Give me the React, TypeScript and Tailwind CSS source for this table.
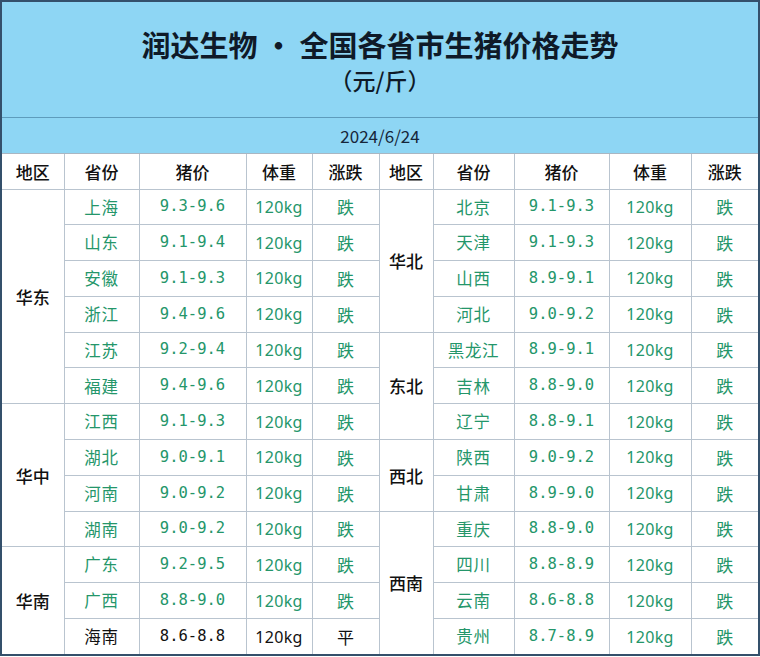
type Row = { province: string; price: string; trend?: string; plain?: boolean };
type Group = { region: string; rows: Row[] };

const leftGroups: Group[] = [
  {
    region: '华东',
    rows: [
      { province: '上海', price: '9.3-9.6' },
      { province: '山东', price: '9.1-9.4' },
      { province: '安徽', price: '9.1-9.3' },
      { province: '浙江', price: '9.4-9.6' },
      { province: '江苏', price: '9.2-9.4' },
      { province: '福建', price: '9.4-9.6' },
    ],
  },
  {
    region: '华中',
    rows: [
      { province: '江西', price: '9.1-9.3' },
      { province: '湖北', price: '9.0-9.1' },
      { province: '河南', price: '9.0-9.2' },
      { province: '湖南', price: '9.0-9.2' },
    ],
  },
  {
    region: '华南',
    rows: [
      { province: '广东', price: '9.2-9.5' },
      { province: '广西', price: '8.8-9.0' },
      { province: '海南', price: '8.6-8.8', trend: '平', plain: true },
    ],
  },
];

const rightGroups: Group[] = [
  {
    region: '华北',
    rows: [
      { province: '北京', price: '9.1-9.3' },
      { province: '天津', price: '9.1-9.3' },
      { province: '山西', price: '8.9-9.1' },
      { province: '河北', price: '9.0-9.2' },
    ],
  },
  {
    region: '东北',
    rows: [
      { province: '黑龙江', price: '8.9-9.1' },
      { province: '吉林', price: '8.8-9.0' },
      { province: '辽宁', price: '8.8-9.1' },
    ],
  },
  {
    region: '西北',
    rows: [
      { province: '陕西', price: '9.0-9.2' },
      { province: '甘肃', price: '8.9-9.0' },
    ],
  },
  {
    region: '西南',
    rows: [
      { province: '重庆', price: '8.8-9.0' },
      { province: '四川', price: '8.8-8.9' },
      { province: '云南', price: '8.6-8.8' },
      { province: '贵州', price: '8.7-8.9' },
    ],
  },
];

type Flat = Row & { region?: string; span?: number; lastGroup: boolean };

// 그룹을 13줄로 펼치기 (첫 줄에만 지역 셀)
function flatten(groups: Group[]): Flat[] {
  const out: Flat[] = [];
  groups.forEach((g, gi) => {
    g.rows.forEach((r, ri) => {
      out.push({
        ...r,
        region: ri === 0 ? g.region : undefined,
        span: ri === 0 ? g.rows.length : undefined,
        lastGroup: gi === groups.length - 1,
      });
    });
  });
  return out;
}

const left = flatten(leftGroups);
const right = flatten(rightGroups);

const line = 'border-[#b9c4cf]';
const cjk = "font-['Noto_Sans_CJK_SC','Noto_Sans',sans-serif]";

function Cells({ row, isLast, lastCol }: { row: Flat; isLast: boolean; lastCol: boolean }) {
  const color = row.plain ? 'text-[#111111]' : 'text-[#24966a]';
  const b = isLast ? '' : 'border-b';
  return (
    <>
      {row.region && (
        <td
          rowSpan={row.span}
          className={`border-r ${row.lastGroup ? '' : 'border-b'} ${line} text-center text-[17px] font-medium text-[#111111]`}
        >
          {row.region}
        </td>
      )}
      <td className={`border-r ${b} ${line} text-center text-[16.5px] tracking-[0.04em] ${color}`}>
        {row.province}
      </td>
      <td className={`border-r ${b} ${line} text-center font-['DejaVu_Sans_Mono',monospace] text-[15.5px] ${color}`}>
        {row.price}
      </td>
      <td className={`border-r ${b} ${line} text-center text-[16px] tracking-[0.02em] font-['Noto_Sans',sans-serif] ${color}`}>
        120kg
      </td>
      <td className={`${lastCol ? '' : 'border-r'} ${b} ${line} text-center text-[17px] ${color}`}>
        {row.trend ?? '跌'}
      </td>
    </>
  );
}

const headers = ['地区', '省份', '猪价', '体重', '涨跌'];

export default function App() {
  return (
    <div className={`w-[760px] h-[657px] bg-white ${cjk}`}>
      <div className="w-[760px] h-[656px] border-2 border-[#34506b] overflow-hidden">
        {/* 제목 */}
        <div className="h-[116px] bg-[#8ed6f4] border-b border-[#5e9cbc] flex flex-col items-center pt-[24px] text-[#0f1a28]">
          <div className="text-[29px] leading-[36px] font-bold">润达生物 · 全国各省市生猪价格走势</div>
          <div className="mt-[4px] text-[23px] leading-[28px] font-medium">（元/斤）</div>
        </div>
        <div className="h-[36px] bg-[#8ed6f4] border-b border-[#a9b6c2] flex items-center justify-center text-[17px] text-[#16263a]">
          2024/6/24
        </div>

        <table className="w-full table-fixed border-collapse">
          <colgroup>
            <col className="w-[62px]" />
            <col className="w-[75px]" />
            <col className="w-[107px]" />
            <col className="w-[66px]" />
            <col className="w-[67px]" />
            <col className="w-[54px]" />
            <col className="w-[81px]" />
            <col className="w-[95px]" />
            <col className="w-[82px]" />
            <col className="w-[67px]" />
          </colgroup>
          <thead>
            <tr className="h-[35px]">
              {[...headers, ...headers].map((h, i) => (
                <th
                  key={i}
                  className={`${i === 9 ? '' : 'border-r'} border-b ${line} text-center text-[17px] font-medium text-[#111111]`}
                >
                  {h}
                </th>
              ))}
            </tr>
          </thead>
          <tbody>
            {left.map((row, i) => (
              <tr key={i} className="h-[35.8px]">
                <Cells row={row} isLast={i === left.length - 1} lastCol={false} />
                <Cells row={right[i]} isLast={i === right.length - 1} lastCol />
              </tr>
            ))}
          </tbody>
        </table>
      </div>
    </div>
  );
}
